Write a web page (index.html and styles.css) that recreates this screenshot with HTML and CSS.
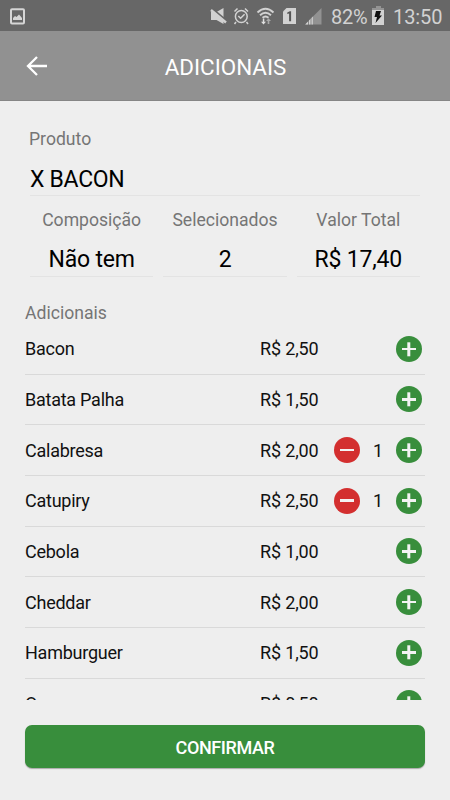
FILE: index.html
```html
<!DOCTYPE html>
<html lang="pt-BR">
<head>
<meta charset="utf-8">
<title>Adicionais</title>
<link rel="stylesheet" href="styles.css">
</head>
<body>
<div class="screen">
  <div class="status">
    <svg class="status-photo" width="16" height="18" viewBox="0 0 16 18"><rect x="1" y="1.2" width="13" height="14.4" rx="1" fill="none" stroke="#d6d6d6" stroke-width="2"/><path d="M3 12v-2l2-2 1.500 1L9 6.500 12 10v2z" fill="#d6d6d6"/></svg>
    <svg class="status-icons" width="125" height="31" viewBox="0 0 125 31">
      <path d="M11 12h5.500l7-4v16l-7-4H11z" fill="#d2d2d2"/>
      <path d="M10 7.500 26 21" stroke="#676767" stroke-width="3"/><path d="M11 10 26 22.500" stroke="#d2d2d2" stroke-width="2.400"/>
      <g fill="none" stroke="#d2d2d2" stroke-width="1.500"><circle cx="41.300" cy="16.500" r="5.900"/><path d="m38.300 16 2.300 2.300 4-4M34.500 11.500l3-3M48 11.500l-3-3M36 22l-1.500 2M46.500 22l1.500 2"/></g>
      <g fill="none" stroke="#d2d2d2" stroke-width="1.900"><path d="M57.500 12.500Q65.500 5 73.500 12.500M60 15.300q5.500-4.900 11 0M62.500 17.800q3-2.500 6 0"/></g>
      <path d="M62.800 18.500h1.500v3.200H66l-2.500 2.800-2.500-2.800h1.800z" fill="#e0e0e0"/><path d="M67.700 24v-3h-1.600l2.400-2.800L71 21h-1.700v3z" fill="#aaa"/>
      <path d="M86.500 8H96v16H83V11.500z" fill="#d2d2d2"/><path d="M87.300 14v-1.400l2.500-1.300h1.300v10h-2v-7.800z" fill="#555"/>
      <path d="M121.500 8v16.500H105z" fill="#929292"/><path d="M112.800 16.500v8h-7.500z" fill="#d2d2d2"/><path d="M108.500 19v6M111 17v8" stroke="#676767" stroke-width=".7"/>
    </svg>
    <span class="battery-text">82%</span>
    <svg class="battery" width="14" height="20" viewBox="0 0 14 20"><path d="M5 0h5v2h3v3H1V2h4z" fill="#949494"/><path d="M1 4h12v15H1z" fill="#d2d2d2"/><path d="M5 5h5L8.500 9.500H11L4.500 17 6 11H3.500z" fill="#111"/></svg>
    <span class="clock">13:50</span>
  </div>
  <header class="header">
    <svg class="back" width="22" height="20" viewBox="0 0 22 20"><path d="M11 1 2 10l9 9M2 10h19" fill="none" stroke="#fff" stroke-width="2.300"/></svg>
    <h1 class="title">ADICIONAIS</h1>
  </header>
  <main class="main">
    <section class="product">
      <div class="label product-label">Produto</div>
      <div class="value product-value">X BACON</div>
    </section>
    <section class="summary">
      <div class="field"><div class="label">Composição</div><div class="value">Não tem</div></div>
      <div class="field"><div class="label">Selecionados</div><div class="value">2</div></div>
      <div class="field"><div class="label">Valor Total</div><div class="value">R$ 17,40</div></div>
    </section>
    <h2 class="label list-title">Adicionais</h2>
    <div class="list">
      <div class="row"><span class="name">Bacon</span><span class="price">R$ 2,50</span><i class="btn plus"></i></div>
      <div class="row"><span class="name">Batata Palha</span><span class="price">R$ 1,50</span><i class="btn plus"></i></div>
      <div class="row"><span class="name">Calabresa</span><span class="price">R$ 2,00</span><i class="btn minus"></i><span class="count">1</span><i class="btn plus"></i></div>
      <div class="row"><span class="name">Catupiry</span><span class="price">R$ 2,50</span><i class="btn minus"></i><span class="count">1</span><i class="btn plus"></i></div>
      <div class="row"><span class="name">Cebola</span><span class="price">R$ 1,00</span><i class="btn plus"></i></div>
      <div class="row"><span class="name">Cheddar</span><span class="price">R$ 2,00</span><i class="btn plus"></i></div>
      <div class="row"><span class="name">Hamburguer</span><span class="price">R$ 1,50</span><i class="btn plus"></i></div>
      <div class="row"><span class="name">Ovo</span><span class="price">R$ 0,50</span><i class="btn plus"></i></div>
    </div>
    <button class="confirm">CONFIRMAR</button>
  </main>
</div>
</body>
</html>
```
FILE: styles.css
```css
* { box-sizing: border-box; }
body { margin: 0; background: #eee; font-family: Roboto, sans-serif; }
.screen { width: 450px; height: 800px; overflow: hidden; display: flex; flex-direction: column; background: #eee; }
.status { height: 31px; flex: none; display: flex; align-items: center; background: #676767; color: #d2d2d2; }
.status-photo { margin: 2px 0 0 10px; }
.status-icons { margin-left: 174px; }
.battery-text { width: 40px; margin-left: 6px; font-size: 20px; line-height: 31px; padding-top: 3px; white-space: nowrap; letter-spacing: -0.2px; }
.battery { margin: 1px 0 0 0; }
.clock { margin-left: 8px; font-size: 20px; line-height: 31px; padding-top: 3px; letter-spacing: -0.1px; }
.header { height: 70px; flex: none; display: grid; grid-template-columns: 50px 1fr 50px; align-items: center; background: #919191; border-bottom: 1px solid #858585; }
.back { margin-left: 26px; }
.title { margin: 3px 0 0; padding-left: 1px; text-align: center; font-weight: 400; font-size: 22.4px; line-height: 26px; color: #fff; }
.main { padding: 0 25px; }
.label { font-size: 17.6px; line-height: 22px; color: #757575; font-weight: 400; }
.value { font-size: 23px; line-height: 28px; color: #000; letter-spacing: -0.2px; }
.product { height: 95px; margin: 0 5px; padding-top: 27px; border-bottom: 1px solid #e3e3e3; }
.product-label { margin-left: -1px; }
.product-value { margin-top: 16px; letter-spacing: -0.3px; }
.summary { display: grid; grid-template-columns: 1fr 1fr 1fr; gap: 10px; margin: 0 5px; text-align: center; }
.field { height: 81px; padding-top: 13px; border-bottom: 1px solid #e3e3e3; white-space: nowrap; }
.field .value { margin-top: 15px; }
.list-title { margin: 25px 0 0; }
.list { height: 376px; overflow: hidden; }
.row { height: 50.67px; display: grid; grid-template-columns: 235px 74px 26px 36px 26px; align-items: center; border-bottom: 1px solid #d9d9d9; font-size: 18px; line-height: 22px; letter-spacing: -0.25px; color: #111; }
.price, .name { padding-top: 1px; white-space: nowrap; }
.price { letter-spacing: -0.15px; }
.count { text-align: center; padding-top: 1px; }
.btn { position: relative; width: 26px; height: 26px; border-radius: 50%; }
.plus { grid-column: 5; background: #388e3c; }
.minus { background: #d32f2f; }
.btn::before, .plus::after { content: ""; position: absolute; left: 6px; top: 11.7px; width: 14px; height: 2.6px; background: #f3f3f3; }
.plus::after { transform: rotate(90deg); }
.confirm { display: block; width: 400px; height: 43px; margin-top: 25px; padding: 2px 0 0; border: 0; border-radius: 7px; background: #388e3c; box-shadow: 0 1px 1px #aaa; color: #fff; font: 500 18px Roboto, sans-serif; letter-spacing: -0.4px; }
```
